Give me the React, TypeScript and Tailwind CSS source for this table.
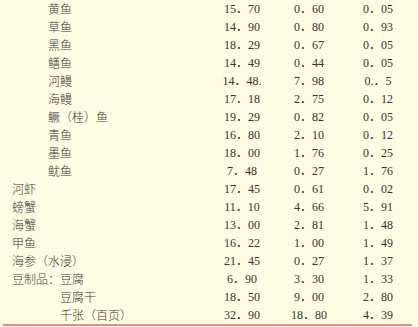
import React from "react";

type Row = { name: React.ReactNode; indent: "top" | "sub" | "tofu"; a: string; b: string; c: string };

const rows: Row[] = [
  { name: "黄鱼", indent: "sub", a: "15．70", b: "0．60", c: "0．05" },
  { name: "草鱼", indent: "sub", a: "14．90", b: "0．80", c: "0．93" },
  { name: "黑鱼", indent: "sub", a: "18．29", b: "0．67", c: "0．05" },
  { name: "鳝鱼", indent: "sub", a: "14．49", b: "0．44", c: "0．05" },
  { name: "河鳗", indent: "sub", a: "14．48.", b: "7．98", c: "0.．5" },
  { name: "海鳗", indent: "sub", a: "17．18", b: "2．75", c: "0．12" },
  { name: "鳜（桂）鱼", indent: "sub", a: "19．29", b: "0．82", c: "0．05" },
  { name: "青鱼", indent: "sub", a: "16．80", b: "2．10", c: "0．12" },
  { name: "墨鱼", indent: "sub", a: "18．00", b: "1．76", c: "0．25" },
  { name: "鱿鱼", indent: "sub", a: "7．48", b: "0．27", c: "1．76" },
  { name: "河虾", indent: "top", a: "17．45", b: "0．61", c: "0．02" },
  { name: "螃蟹", indent: "top", a: "11．10", b: "4．66", c: "5．91" },
  { name: "海蟹", indent: "top", a: "13．00", b: "2．81", c: "1．48" },
  { name: "甲鱼", indent: "top", a: "16．22", b: "1．00", c: "1．49" },
  { name: "海参（水浸）", indent: "top", a: "21．45", b: "0．27", c: "1．37" },
  { name: "豆制品：豆腐", indent: "top", a: "6．90", b: "3．30", c: "1．33" },
  { name: "豆腐干", indent: "tofu", a: "18．50", b: "9．00", c: "2．80" },
  { name: "千张（百页）", indent: "tofu", a: "32．90", b: "18．80", c: "4．39" },
];

const cjk = "font-['Noto_Sans_CJK_SC',sans-serif] font-light text-[#383838]";
const num = "font-['Liberation_Serif','Noto_Sans_CJK_SC',serif] text-[#333]";

function App() {
  return (
    <div className="w-[418px] h-[327px] bg-[#fffde3] text-[12px] leading-[18px] overflow-hidden">
      <div>
        {rows.map((r, i) => (
          <div key={i} className="grid grid-cols-[205px_74px_60px_78px] h-[18px]">
            <div
              className={`${cjk} whitespace-nowrap ${
                r.indent === "top" ? "pl-[12px]" : r.indent === "sub" ? "pl-[48px]" : "pl-[60px]"
              }`}
            >
              {r.name}
            </div>
            <div className={`${num} text-center whitespace-nowrap`}>{r.a}</div>
            <div className={`${num} text-center whitespace-nowrap`}>{r.b}</div>
            <div className={`${num} text-center whitespace-nowrap`}>{r.c}</div>
          </div>
        ))}
      </div>
      <div className="ml-[3px] w-[409px] h-[2px] bg-[#e38a82]" />
    </div>
  );
}

export default App;
